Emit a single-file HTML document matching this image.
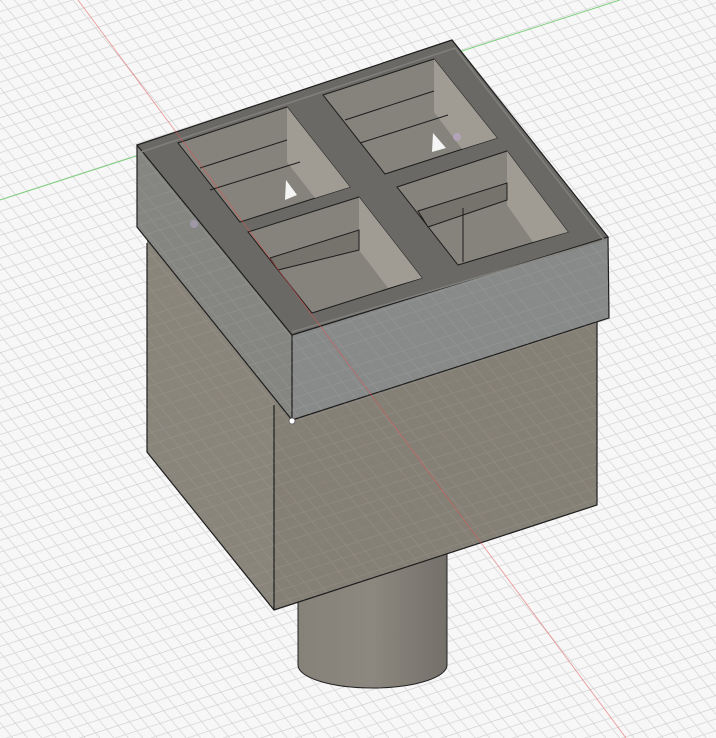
<!DOCTYPE html>
<html><head><meta charset="utf-8"><style>
html,body{margin:0;padding:0;background:#f7f7f7;overflow:hidden;width:716px;height:738px;}
svg{display:block;}
</style></head><body>
<svg width="716" height="738" viewBox="0 0 716 738" xmlns="http://www.w3.org/2000/svg" overflow="hidden">
<defs>
<pattern id="g" width="60" height="60" patternUnits="userSpaceOnUse" patternTransform="matrix(0.951,-0.309,0.634,0.773,0,0)">
<path d="M0 12H60M0 24H60M0 36H60M0 48H60M12 0V60M24 0V60M36 0V60M48 0V60" stroke="#dcdcdc" stroke-width="1" fill="none"/>
<path d="M0 0H60M0 0V60" stroke="#c8c8c8" stroke-width="1.2" fill="none"/>
</pattern>
<linearGradient id="cyl" x1="0" x2="1" y1="0" y2="0">
<stop offset="0" stop-color="#86827a"/><stop offset="0.5" stop-color="#8c887f"/><stop offset="1" stop-color="#74706a"/>
</linearGradient>
</defs>
<rect width="716" height="738" fill="#f7f7f7"/>
<rect width="716" height="738" fill="url(#g)"/>
<line x1="0" y1="200" x2="620" y2="0" stroke="#7fcf7f" stroke-width="1"/>
<path d="M298 560 V665 A74.5 23 0 0 0 447 665 V540 Z" fill="url(#cyl)" stroke="#222" stroke-width="1"/>
<polygon points="147,230 285,400 274,610 147,452" fill="#8a857b"/>
<polygon points="274,403 597,310 597,505 274,610" fill="#858076"/>
<polyline points="147,243 147,452 274,610 597,505 597,318" fill="none" stroke="#1d1d1d" stroke-width="1.2"/>
<line x1="274" y1="405" x2="274" y2="610" stroke="#1d1d1d" stroke-width="1.2"/>
<polygon points="137,145 292,335 292,420 137,227" fill="#858682"/>
<polygon points="292,335 608,237 609,318 292,420" fill="#878a88"/>
<polyline points="137,145 137,227 292,420 609,318 608,237" fill="none" stroke="#1d1d1d" stroke-width="1.2"/>
<line x1="292" y1="335" x2="292" y2="420" stroke="#1d1d1d" stroke-width="1.2"/>
<polygon points="137,145 452,40 608,237 292,335" fill="#6a6965" stroke="#1d1d1d" stroke-width="1.2"/>
<polyline points="141,152 455,48 604,240 292,332" fill="none" stroke="#807f7b" stroke-width="1.5"/>
<g stroke="#1d1d1d" stroke-width="1">
<polygon points="178,143 287,107 350,187 240,222" fill="#86837c"/>
<polygon points="287,107 350,187 315,198 287,162" fill="#a09c94" stroke="none"/>
<polyline points="200,168 287,140" fill="none"/>
<polyline points="210,190 300,162" fill="none"/>
<polygon points="286,180 297,195 285,200" fill="#f4f4f4" stroke="none"/>
<polygon points="323,95 434,59 497,138 385,174" fill="#86837c"/>
<polygon points="434,59 497,138 462,149 434,112" fill="#a09c94" stroke="none"/>
<polyline points="345,120 434,91" fill="none"/>
<polyline points="360,143 448,115" fill="none"/>
<polygon points="433,133 446,148 432,152" fill="#f4f4f4" stroke="none"/>
<polygon points="248,232 359,197 422,278 312,313" fill="#86837c"/>
<polygon points="359,197 422,278 388,288 359,250" fill="#a09c94" stroke="none"/>
<polygon points="270,258 359,230 359,250 278,270" fill="#76736c"/>
<polygon points="397,187 507,151 568,232 458,265" fill="#86837c"/>
<polygon points="507,151 568,232 533,242 507,205" fill="#a09c94" stroke="none"/>
<polygon points="418,211 507,183 507,200 428,227" fill="#76736c"/>
<line x1="463" y1="208" x2="463" y2="262"/>
</g>
<g opacity="0.1">
<polygon points="147,243 274,403 274,610 147,452" fill="url(#g)"/>
<polygon points="274,403 597,318 597,505 274,610" fill="url(#g)"/>
<polygon points="292,335 608,237 609,318 292,420" fill="url(#g)"/>
<polygon points="137,145 292,335 292,420 137,227" fill="url(#g)"/>
</g>
<line x1="78" y1="0" x2="626" y2="738" stroke="#e05050" stroke-width="1" opacity="0.5"/>
<circle cx="292" cy="421" r="3" fill="#fff" stroke="#555" stroke-width="0.8"/>
<circle cx="457" cy="137" r="4" fill="#b9a6c9" opacity="0.7"/>
<circle cx="194" cy="224" r="4" fill="#b9a6c9" opacity="0.5"/>
</svg>
</body></html>
